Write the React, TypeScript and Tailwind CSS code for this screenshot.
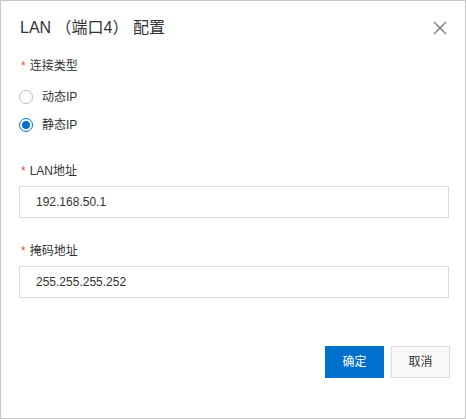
import { useState } from 'react';

function Radio({ checked, label, onClick }: { checked: boolean; label: string; onClick: () => void }) {
  return (
    <label className="flex h-5 items-center cursor-pointer" onClick={onClick}>
      <span
        className={
          checked
            ? 'flex h-[14px] w-[14px] items-center justify-center rounded-full border border-[#0070cc] bg-white'
            : 'flex h-[14px] w-[14px] items-center justify-center rounded-full border border-[#bcbcbc] bg-white'
        }
      >
        {checked && <span className="h-[8px] w-[8px] rounded-full bg-[#0070cc]" />}
      </span>
      <span className="ml-[9px] text-[12px] text-[#333]">{label}</span>
    </label>
  );
}

function Field({ label, value, onChange }: { label: string; value: string; onChange: (v: string) => void }) {
  return (
    <div>
      <div className="flex h-[18px] items-center text-[12px] leading-[18px] text-[#333]">
        <span className="ml-[2px] mr-[4px] text-[#e8533f]">*</span>
        {label}
      </div>
      <input
        value={value}
        onChange={(e) => onChange(e.target.value)}
        className="mt-[6px] h-8 w-[430px] border border-[#dcdcdc] bg-white pl-4 text-[12px] text-[#333] outline-none"
      />
    </div>
  );
}

export default function App() {
  const [mode, setMode] = useState<'dhcp' | 'static'>('static');
  const [ip, setIp] = useState('192.168.50.1');
  const [mask, setMask] = useState('255.255.255.252');

  return (
    <div className="h-[419px] w-[466px] border border-[#c6c6c6] bg-white font-['Liberation_Sans','Noto_Sans_CJK_SC',sans-serif]">
      {/* Header */}
      <div className="flex items-center justify-between pl-[19px] pr-[17px] pt-[15px]">
        <h2 className="text-[16px] leading-6 text-[#333]">LAN （端口4） 配置</h2>
        <button className="flex h-4 w-4 items-center justify-center text-[#777]">
          <svg width="14" height="14" viewBox="0 0 14 14" fill="none" stroke="currentColor" strokeWidth="1.4">
            <path d="M1 1 L13 13 M13 1 L1 13" />
          </svg>
        </button>
      </div>

      {/* Body */}
      <div className="pl-[18px]">
        <div className="mt-[17px] flex h-[18px] items-center text-[12px] leading-[18px] text-[#333]">
          <span className="ml-[2px] mr-[4px] text-[#e8533f]">*</span>
          连接类型
        </div>
        <div className="mt-3 flex flex-col gap-2">
          <Radio checked={mode === 'dhcp'} label="动态IP" onClick={() => setMode('dhcp')} />
          <Radio checked={mode === 'static'} label="静态IP" onClick={() => setMode('static')} />
        </div>

        <div className="mt-[27px]">
          <Field label="LAN地址" value={ip} onChange={setIp} />
        </div>
        <div className="mt-[24px]">
          <Field label="掩码地址" value={mask} onChange={setMask} />
        </div>
      </div>

      {/* Footer */}
      <div className="mt-[48px] flex justify-end gap-[7px] pr-[15px]">
        <button className="h-8 w-[59px] bg-[#0070cc] text-[12px] text-white">确定</button>
        <button className="h-8 w-[59px] border border-[#dcdcdc] bg-[#f8f8f8] text-[12px] text-[#333]">取消</button>
      </div>
    </div>
  );
}
